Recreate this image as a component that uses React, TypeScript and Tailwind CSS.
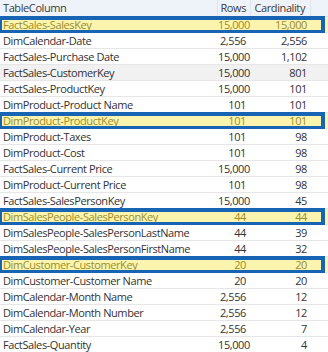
import React from "react";

type Row = { name: string; rows: string; card: string; hit?: boolean; shade?: boolean };

const data: Row[] = [
  { name: "FactSales-SalesKey", rows: "15,000", card: "15,000", hit: true },
  { name: "DimCalendar-Date", rows: "2,556", card: "2,556" },
  { name: "FactSales-Purchase Date", rows: "15,000", card: "1,102" },
  { name: "FactSales-CustomerKey", rows: "15,000", card: "801", shade: true },
  { name: "FactSales-ProductKey", rows: "15,000", card: "101" },
  { name: "DimProduct-Product Name", rows: "101", card: "101" },
  { name: "DimProduct-ProductKey", rows: "101", card: "101", hit: true },
  { name: "DimProduct-Taxes", rows: "101", card: "98" },
  { name: "DimProduct-Cost", rows: "101", card: "98" },
  { name: "FactSales-Current Price", rows: "15,000", card: "98" },
  { name: "DimProduct-Current Price", rows: "101", card: "98" },
  { name: "FactSales-SalesPersonKey", rows: "15,000", card: "45" },
  { name: "DimSalesPeople-SalesPersonKey", rows: "44", card: "44", hit: true },
  { name: "DimSalesPeople-SalesPersonLastName", rows: "44", card: "39" },
  { name: "DimSalesPeople-SalesPersonFirstName", rows: "44", card: "32" },
  { name: "DimCustomer-CustomerKey", rows: "20", card: "20", hit: true },
  { name: "DimCustomer-Customer Name", rows: "20", card: "20" },
  { name: "DimCalendar-Month Name", rows: "2,556", card: "12" },
  { name: "DimCalendar-Month Number", rows: "2,556", card: "12" },
  { name: "DimCalendar-Year", rows: "2,556", card: "7" },
  { name: "FactSales-Quantity", rows: "15,000", card: "4" },
];

const cols = "grid grid-cols-[218px_33px_60px_1fr]";

export default function App() {
  return (
    <div className="w-[328px] h-[352px] overflow-hidden bg-white text-[11px] tracking-[-0.4px] text-[#333] font-['Open_Sans',sans-serif]">
      {/* header */}
      <div className={`${cols} h-[17px] bg-[#eef3f9] border-b border-[#d9e2ec] text-[#3a3a3a]`}>
        <div className="pl-[3px] leading-[16px] border-r border-[#dde4ec]">TableColumn</div>
        <div className="pr-[4px] text-right leading-[16px] border-r border-[#dde4ec]">Rows</div>
        <div className="pr-[5px] text-right leading-[16px] border-r border-[#dde4ec]">Cardinality</div>
        <div />
      </div>

      {data.map((r) => (
        <div
          key={r.name}
          className={`${cols} relative h-[16px] leading-[15px] border-b border-[#e6e6e6] ${
            r.hit ? "bg-[#fbf4ae] text-[#9a8d2c]" : r.shade ? "bg-[#f1f1f1]" : "bg-white"
          }`}
        >
          <div className="pl-[3px] whitespace-nowrap overflow-hidden">{r.name}</div>
          <div className="pr-[5px] text-right">{r.rows}</div>
          <div className="pr-[4px] text-right">{r.card}</div>
          <div />
          {r.hit && (
            <div className="absolute top-[-1px] bottom-[-2px] left-[-2px] right-[3px] border-[4px] border-[#1864b4] pointer-events-none" />
          )}
        </div>
      ))}
    </div>
  );
}
